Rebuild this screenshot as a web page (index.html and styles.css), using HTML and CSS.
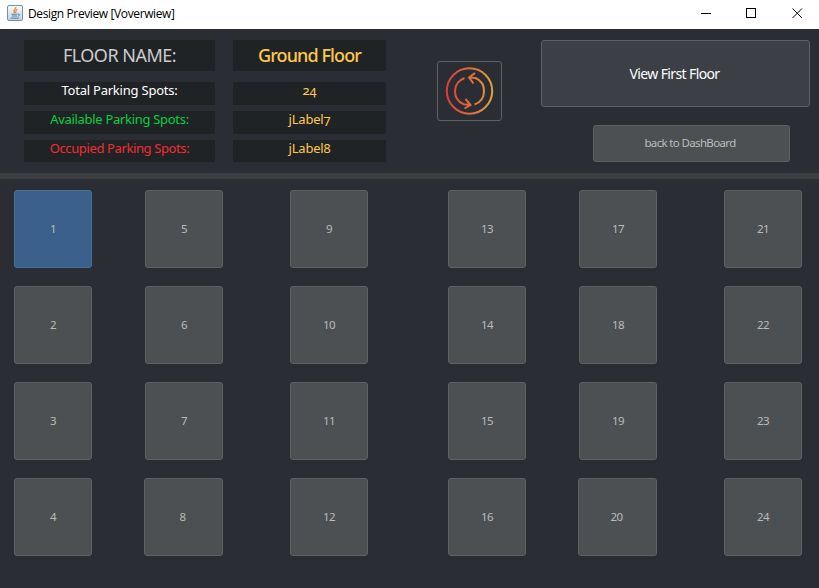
FILE: index.html
```html
<!DOCTYPE html>
<html lang="en">
<head>
<meta charset="utf-8">
<title>Design Preview [Voverwiew]</title>
<link rel="stylesheet" href="styles.css">
</head>
<body>
<header class="titlebar">
  <svg class="app-icon" width="16" height="16" viewBox="0 0 16 16">
    <defs><linearGradient id="tile" x1="0" y1="0" x2="0" y2="1"><stop offset="0" stop-color="#fbfcfd"/><stop offset="1" stop-color="#c3d0dc"/></linearGradient></defs>
    <rect x=".5" y=".5" width="15" height="15" rx="1.5" fill="url(#tile)" stroke="#7593ac"/>
    <path d="M8.8 2C9.6 4 5.2 4.700 7.600 8M10.300 4.300C8 5.400 9.700 6.100 8.300 8" fill="none" stroke="#e58a36" stroke-width="1.200"/>
    <path d="M4.500 9.200h6M5 11h5M3.500 13.200h8.500M10.800 9c2.600-.6 2.300 1.800 0 2.200" fill="none" stroke="#5382a1"/>
  </svg>
  <span class="title">Design Preview [Voverwiew]</span>
  <svg class="controls" width="102" height="12" viewBox="0 0 102 12" fill="none" stroke="#000">
    <path d="M0 6.500h10M45.500 1.500h9v9h-9z" shape-rendering="crispEdges"/>
    <path d="M91.500 1.500l9.500 9.500M101 1.500L91.500 11"/>
  </svg>
</header>
<section class="summary">
  <dl class="labels">
    <dt class="cell head floor"><span>FLOOR NAME:</span></dt><dd class="cell head ground"><span>Ground Floor</span></dd>
    <dt class="cell total"><span>Total Parking Spots:</span></dt><dd class="cell value"><span>24</span></dd>
    <dt class="cell available"><span>Available Parking Spots:</span></dt><dd class="cell value"><span>jLabel7</span></dd>
    <dt class="cell occupied"><span>Occupied Parking Spots:</span></dt><dd class="cell value"><span>jLabel8</span></dd>
  </dl>
  <button class="refresh" aria-label="Refresh">
    <svg width="50" height="50" viewBox="0 0 50 50" fill="none" stroke="url(#warm)" stroke-width="2">
      <defs><linearGradient id="warm" gradientUnits="userSpaceOnUse" x1="2" y1="0" x2="48" y2="0"><stop offset="0" stop-color="#d93c40"/><stop offset=".5" stop-color="#e06c3b"/><stop offset="1" stop-color="#dda535"/></linearGradient></defs>
      <circle cx="24.500" cy="25" r="22.700"/>
      <path d="M19.500 12C7 17 7 33 18.500 38.200L25 39M29.500 38.500C42 34 42 17 30.500 12L24.500 11.500M30 7L24 11.500L28.500 17.500M19.500 42.500L25.500 39L20.500 33"/>
    </svg>
  </button>
  <nav class="actions">
    <button class="view"><span>View First Floor</span></button>
    <button class="back"><span>back to DashBoard</span></button>
  </nav>
</section>
<main class="spots">
  <div class="column"><button class="spot selected">1</button><button class="spot">2</button><button class="spot">3</button><button class="spot">4</button></div>
  <div class="column"><button class="spot">5</button><button class="spot">6</button><button class="spot">7</button><button class="spot wide">8</button></div>
  <div class="column"><button class="spot">9</button><button class="spot">10</button><button class="spot">11</button><button class="spot">12</button></div>
  <div class="column"><button class="spot">13</button><button class="spot">14</button><button class="spot">15</button><button class="spot">16</button></div>
  <div class="column"><button class="spot">17</button><button class="spot">18</button><button class="spot">19</button><button class="spot wide">20</button></div>
  <div class="column"><button class="spot">21</button><button class="spot">22</button><button class="spot">23</button><button class="spot">24</button></div>
</main>
</body>
</html>
```
FILE: styles.css
```css
* { box-sizing: border-box; }
body { margin: 0; width: 819px; height: 588px; overflow: hidden; background: #2a2d34; font-family: "Noto Sans", sans-serif; }
button { margin: 0; padding: 0 0 2px; border: 1px solid #5e6162; border-radius: 3px; background: #4c5052; color: #bbb; font: 11.5px "Noto Sans", sans-serif; white-space: nowrap; }
.titlebar { height: 29px; background: #fff; display: flex; align-items: center; padding: 0 16px 3px 7px; }
.title { flex: 1; margin-left: 5px; font: 12px/20px "Open Sans", sans-serif; letter-spacing: -.38px; color: #000; padding-top: 1px; }
.summary { height: 150px; border-bottom: 6px solid #3c3f41; display: flex; align-items: flex-start; padding: 11px 9px 0 24px; }
.labels { margin: 0; display: grid; grid-template-columns: 191px 153px; grid-template-rows: 36px 23px 23px 22px; column-gap: 18px; row-gap: 6px; }
.cell { margin: 0; background: #1f2326; color: #ffc84a; text-align: center; white-space: nowrap; font-size: 13px; line-height: 16px; }
.head { height: 31px; font-size: 18px; line-height: 31px; }
.floor { color: #ccc; letter-spacing: -.5px; }
.ground { font-weight: 500; letter-spacing: -.9px; }
.total { color: #fff; letter-spacing: -.22px; }
.available { color: #05d041; letter-spacing: -.3px; }
.occupied { color: #f62b2f; letter-spacing: -.38px; }
.value { font-variant-numeric: oldstyle-nums; letter-spacing: -.2px; }
.refresh { width: 65px; height: 60px; margin: 21px 0 0 51px; padding: 0; background: #2a2d34; display: grid; place-items: center; }
.actions { margin-left: auto; display: flex; flex-direction: column; align-items: flex-end; gap: 18px; }
.view { width: 269px; height: 67px; padding: 0 2px 0 0; background: #3c3f46; color: #fff; font-size: 14px; letter-spacing: -.62px; }
.back { width: 197px; height: 37px; margin-right: 20px; padding-right: 3px; letter-spacing: -.65px; }
.spots { display: flex; padding: 11px 17px 0 14px; }
.column { width: 78px; display: flex; flex-direction: column; align-items: flex-end; gap: 18px; margin-right: 53px; }
.column:nth-child(2), .column:nth-child(5) { margin-right: 67px; }
.column:nth-child(3) { margin-right: 80px; }
.column:last-child { margin-right: 0; }
.spot { width: 78px; height: 78px; flex: none; letter-spacing: -.6px; }
.wide { width: 79px; padding-right: 2px; }
.selected { background: #3b608c; border-color: #4c708c; }
```
